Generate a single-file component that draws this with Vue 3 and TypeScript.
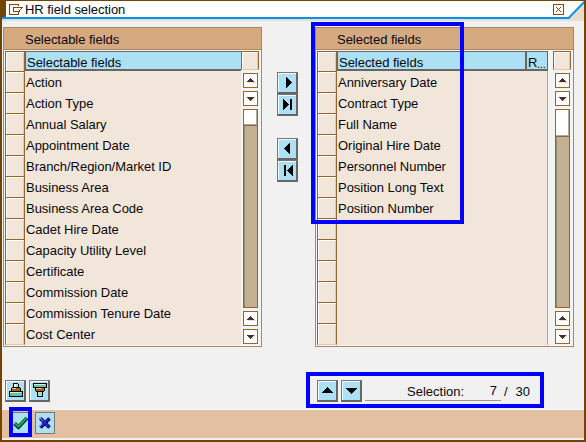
<script setup lang="ts">
interface Panel {
  side: string
  title: string
  rows: string[]
}

const ROW_COUNT = 13
const panels: Panel[] = [
  {
    side: 'left',
    title: 'Selectable fields',
    rows: [
      'Action', 'Action Type', 'Annual Salary', 'Appointment Date',
      'Branch/Region/Market ID', 'Business Area', 'Business Area Code',
      'Cadet Hire Date', 'Capacity Utility Level', 'Certificate',
      'Commission Date', 'Commission Tenure Date', 'Cost Center',
    ],
  },
  {
    side: 'right',
    title: 'Selected fields',
    rows: [
      'Anniversary Date', 'Contract Type', 'Full Name', 'Original Hire Date',
      'Personnel Number', 'Position Long Text', 'Position Number',
    ],
  },
]
const moves = [
  { name: 'Add', d: 'M9 5h1v1h1v1h1v1h1v1h1v1h1v1h-1v1h-1v1h-1v1h-1v1h-1v1h-1z' },
  { name: 'Add all', d: 'M6 5h1v1h1v1h1v1h1v1h1v1h1v1h-1v1h-1v1h-1v1h-1v1h-1v1h-1zM13 5h2v11h-2z' },
  { name: 'Remove', d: 'M13 5h-1v1h-1v1h-1v1h-1v1h-1v1h-1v1h1v1h1v1h1v1h1v1h1v1h1z' },
  { name: 'Remove all', d: 'M7 5h2v11h-2zM16 5h-1v1h-1v1h-1v1h-1v1h-1v1h-1v1h1v1h1v1h1v1h1v1h1v1h1z' },
]
</script>

<template>
  <div class="window">
    <header class="titlebar">
      <svg class="menu-icon" width="16" height="13" viewBox="0 0 16 13" shape-rendering="crispEdges">
        <path d="M10.500 3V1.500H1.500V11.500H10.500V9M5 4.500H14.500M5.500 4V8.500H11M13.500 5V6M12.500 6V7M11.500 7V8.500" fill="none" stroke="#85460c" />
      </svg>
      <h1>HR field selection</h1>
      <button class="close" aria-label="Close">
        <svg width="11" height="11" viewBox="0 0 11 11" shape-rendering="crispEdges">
          <path d="M3 3h1v1h1v1h1v-1h1v-1h1v1h-1v1h-1v1h1v1h1v1h-1v-1h-1v-1h-1v1h-1v1h-1v-1h1v-1h1v-1h-1v-1h-1z" fill="#85460c" />
        </svg>
      </button>
      <svg class="corner" width="20" height="20" viewBox="0 0 20 20">
        <path d="M20 2V20H0V18H5z" fill="#eadccb" />
        <path d="M0 17H4.600L20.500 .8" fill="none" stroke="#0095f5" stroke-width="2" />
      </svg>
    </header>

    <main class="lists">
      <template v-for="(p, i) in panels" :key="p.side">
        <section class="panel" :class="p.side">
          <h2>{{ p.title }}</h2>
          <div class="grid">
            <div class="selectors">
              <i v-for="n in ROW_COUNT + 1" :key="n" class="cell"></i>
            </div>
            <div class="data">
              <div class="heads">
                <div class="head">{{ p.title }}</div>
                <div v-if="p.side === 'right'" class="head narrow">R<span>...</span></div>
              </div>
              <div class="records">
                <div v-for="r in p.rows" :key="r" class="record">{{ r }}</div>
              </div>
            </div>
            <div class="side">
              <i class="config"></i>
              <div class="scroll">
                <template v-for="g in 2" :key="g">
                  <svg class="arrow" width="15" height="15" viewBox="0 0 15 15" shape-rendering="crispEdges">
                    <path d="M.5.5h14v14H.5z" fill="#fff" stroke="#94662f" />
                    <path d="M5 9h8v1H5zM9 7h2v1h1v1H9z" fill="#f0dfd0" />
                    <path d="M7 5h1v1h1v1h1v1h1v1H4V8h1V7h1V6h1z" fill="#46302f" />
                  </svg>
                  <svg class="arrow" width="15" height="15" viewBox="0 0 15 15" shape-rendering="crispEdges">
                    <path d="M.5.5h14v14H.5z" fill="#fff" stroke="#94662f" />
                    <path d="M11 6h2v1h-1v1h-1v1h-1v1H8V9h1V8h1V7h1z" fill="#f0dfd0" />
                    <path d="M4 6h7v1h-1v1H9v1H8v1H7V9H6V8H5V7H4z" fill="#46302f" />
                  </svg>
                  <div v-if="g === 1" class="track"><div class="thumb"></div></div>
                </template>
              </div>
            </div>
          </div>
        </section>
        <nav v-if="i === 0" class="moves">
          <button v-for="m in moves" :key="m.name" class="tool" :aria-label="m.name">
            <svg width="21" height="22" viewBox="0 0 21 22" shape-rendering="crispEdges"><path :d="m.d" /></svg>
          </button>
        </nav>
      </template>
    </main>

    <div class="status">
      <button class="tool" aria-label="Sort ascending">
        <svg width="21" height="22" viewBox="0 0 21 22" shape-rendering="crispEdges">
          <path d="M8 3h5v1h1v3h1v1h1v3h2v6H4v-6h2V8h1V7h1z" />
          <path d="M9 4h4v3H9z" fill="#b5e6da" /><path d="M9 4h2v3H9z" fill="#e4fbf5" />
          <path d="M7 8h8v3H7z" fill="#ad5d0b" /><path d="M7 8h4v1H7z" fill="#e3c19b" />
          <path d="M5 12h12v4H5z" fill="#65c5ac" /><path d="M5 12h11v1H5z" fill="#c9f2e7" />
        </svg>
      </button>
      <button class="tool" aria-label="Sort descending">
        <svg width="21" height="22" viewBox="0 0 21 22" shape-rendering="crispEdges">
          <path d="M4 3h14v5h-2v3h-1v1h-1v5H8v-5H7v-1H6V8H4z" />
          <path d="M5 4h12v3H5z" fill="#65c5ac" /><path d="M5 4h11v1H5z" fill="#c9f2e7" />
          <path d="M7 8h8v3H7z" fill="#ad5d0b" /><path d="M7 8h6v1H7z" fill="#e3c19b" />
          <path d="M9 12h4v4H9z" fill="#a9dfd0" />
        </svg>
      </button>
      <div class="selection">
        <button class="tool" aria-label="Up">
          <svg width="21" height="22" viewBox="0 0 21 22" shape-rendering="crispEdges">
            <path d="M10 7h1v1h1v1h1v1h1v1h1v1h1v1H5v-1h1v-1h1v-1h1V9h1V8h1z" />
          </svg>
        </button>
        <button class="tool" aria-label="Down">
          <svg width="21" height="22" viewBox="0 0 21 22" shape-rendering="crispEdges">
            <path d="M5 8h11v1h-1v1h-1v1h-1v1h-1v1h-1v1h-1v-1H9v-1H8v-1H7v-1H6V9H5z" />
          </svg>
        </button>
        <div class="field"><span>Selection:</span><b>7</b></div>
        <span class="slash">/</span><span>30</span>
      </div>
    </div>

    <footer class="footer">
      <button class="flat" aria-label="Continue">
        <svg width="20" height="22" viewBox="0 0 20 22">
          <path d="M4.500 11.500L8.500 15L17 6" fill="none" stroke="#073c1c" stroke-width="4" />
          <path d="M4.800 11.300L8.500 14.500L16.500 5.800" fill="none" stroke="#20a866" stroke-width="1.900" />
        </svg>
      </button>
      <button class="flat" aria-label="Cancel">
        <svg width="20" height="22" viewBox="0 0 20 22">
          <path d="M5.500 6.500L14.500 15.500M14.500 6.500L5.500 15.500" fill="none" stroke="#05053c" stroke-width="3.600" />
          <path d="M5 6L14 15M14 6L5 15" fill="none" stroke="#2525d8" stroke-width="2.200" />
          <path d="M4.500 5.500L8 9M4.500 14.500L7 12" stroke="#9292f2" stroke-width="1" />
        </svg>
      </button>
    </footer>

    <div class="mark mark-fields"></div>
    <div class="mark mark-selection"></div>
    <div class="mark mark-confirm"></div>
  </div>
</template>

<style>
body { margin: 0; overflow: hidden; }
</style>

<style scoped>
* { box-sizing: border-box; }
button { padding: 0; margin: 0; }
svg { display: block; flex: none; }
h1, h2 { margin: 0; font-weight: normal; font-size: 13px; }

.window {
  position: relative;
  display: flex;
  flex-direction: column;
  width: 586px;
  height: 442px;
  background: #f1f1f1;
  border: 2px solid #704404;
  border-top-width: 1px;
  font-family: "Liberation Sans", Arial, sans-serif;
  font-size: 13px;
  letter-spacing: -0.03px;
  color: #08080c;
}
.titlebar {
  display: flex;
  flex: none;
  height: 20px;
  padding-left: 4px;
  background:
    linear-gradient(#704404, #704404) 0 0 / 4px 16px no-repeat,
    linear-gradient(#fff 16px, #0095f5 16px, #0095f5 18px, #eadccb 18px);
  margin-bottom: 6px;
}
.menu-icon { margin: 2px 0 0 2px; }
.titlebar h1 { margin-left: 1px; line-height: 18px; letter-spacing: -0.05px; }
.close {
  width: 11px;
  height: 11px;
  margin: 3px 0 0 auto;
  border: 0;
  background: #fff;
  outline: 1px solid #85460c;
  outline-offset: -1px;
}
.corner { background: linear-gradient(#fff 16px, transparent 16px); }

.lists { display: flex; height: 320px; padding-left: 1px; }
.panel {
  display: flex;
  flex-direction: column;
  width: 259px;
  height: 320px;
  border: 1px solid #ae8661;
}
.panel h2 {
  flex: none;
  height: 22px;
  padding-left: 21px;
  line-height: 24px;
  background: #d6aa80;
  border-bottom: 1px solid #ae8661;
}
.grid { display: flex; flex: 1; padding: 1px; background: #f4f4f4; }
.selectors { width: 20px; }
.cell {
  display: block;
  height: 21px;
  border: 1px solid #94662f;
  border-bottom: 0;
  background: #f2e6da;
  box-shadow: inset 1px 1px #fff, inset -1px 0 #d8cdbf;
}
.cell:first-child { height: 20px; }
.cell:last-child { height: 22px; border-bottom: 1px solid #d8cda8; }
.data { display: flex; flex-direction: column; width: 216px; background: #f2e6da; }
.heads { display: flex; height: 20px; }
.head {
  flex: 1;
  padding-left: 1px;
  line-height: 21px;
  white-space: nowrap;
  background: #ade0f2;
  border: 1px solid #666;
  border-bottom-width: 2px;
}
.left .head { border-right: 0; }
.records { padding-top: 1px; }
.record { height: 21px; padding-left: 1px; line-height: 22px; white-space: nowrap; }
.side { display: flex; flex-direction: column; align-items: flex-start; width: 19px; background: #f4f4f4; }
.config {
  width: 18px;
  height: 19px;
  flex: none;
  background: #f2e6da;
  border: 1px solid #94662f;
  border-bottom-color: #d8cda8;
  box-shadow: inset 1px 1px #fff, inset -1px 0 #d8cdbf;
}
.scroll { display: flex; flex-direction: column; gap: 3px; padding: 3px 0 0 2px; }
.track { width: 15px; height: 199px; background: #c4b194; border: 1px solid #94662f; box-shadow: inset 1px 0 #9d8868; }
.thumb {
  height: 16px;
  background: #fff;
  border-bottom: 1px solid #94662f;
  box-shadow: inset -1px -1px #aaa;
}
.right .data { width: 211px; border-right: 1px solid #aaa; }
.right .side { width: 24px; padding-left: 5px; }
.right .heads { margin-right: -1px; }
.right .thumb { height: 27px; }
.narrow { position: relative; flex: 0 0 22px; border-left-width: 1px; padding-left: 1px; }
.narrow span { position: absolute; left: 10px; top: 2px; letter-spacing: -0.2px; font-size: 11px; line-height: 20px; }

.moves { display: flex; flex-direction: column; width: 53px; padding: 45px 0 0 15px; }
.moves .tool:nth-child(3) { margin-top: 22px; }
.tool {
  flex: none;
  width: 21px;
  height: 22px;
  border: 0;
  background: #ade0f2;
  box-shadow: inset 1px 1px #777, inset -2px -2px #666, inset 2px 2px #effbff;
}
.status { display: flex; gap: 3px; height: 22px; margin-top: 33px; padding-left: 3px; }
.selection { display: flex; gap: 3px; margin-left: 264px; line-height: 23px; }
.field {
  display: flex;
  justify-content: space-between;
  width: 136px;
  height: 21px;
  padding: 0 4px 0 42px;
  border-bottom: 1px solid #999;
  letter-spacing: 0;
}
.field b { font-weight: normal; line-height: 21px; }
.slash { margin: 0 5px 0 0; }

.footer {
  display: flex;
  gap: 5px;
  height: 29px;
  margin-top: 7px;
  padding: 2px 0 0 8px;
  background: #e3c0a2;
  border-top: 1px solid #fff;
}
.flat { width: 20px; height: 22px; border: 1px solid #777; background: #ade0f2; }
.flat svg { margin: -1px; }

.mark { position: absolute; border: 4px solid #00f; pointer-events: none; }
.mark-fields { left: 309px; top: 21px; width: 153px; height: 202px; }
.mark-selection { left: 304px; top: 371px; width: 238px; height: 36px; }
.mark-confirm { left: 7px; top: 406px; width: 23px; height: 30px; }
</style>
